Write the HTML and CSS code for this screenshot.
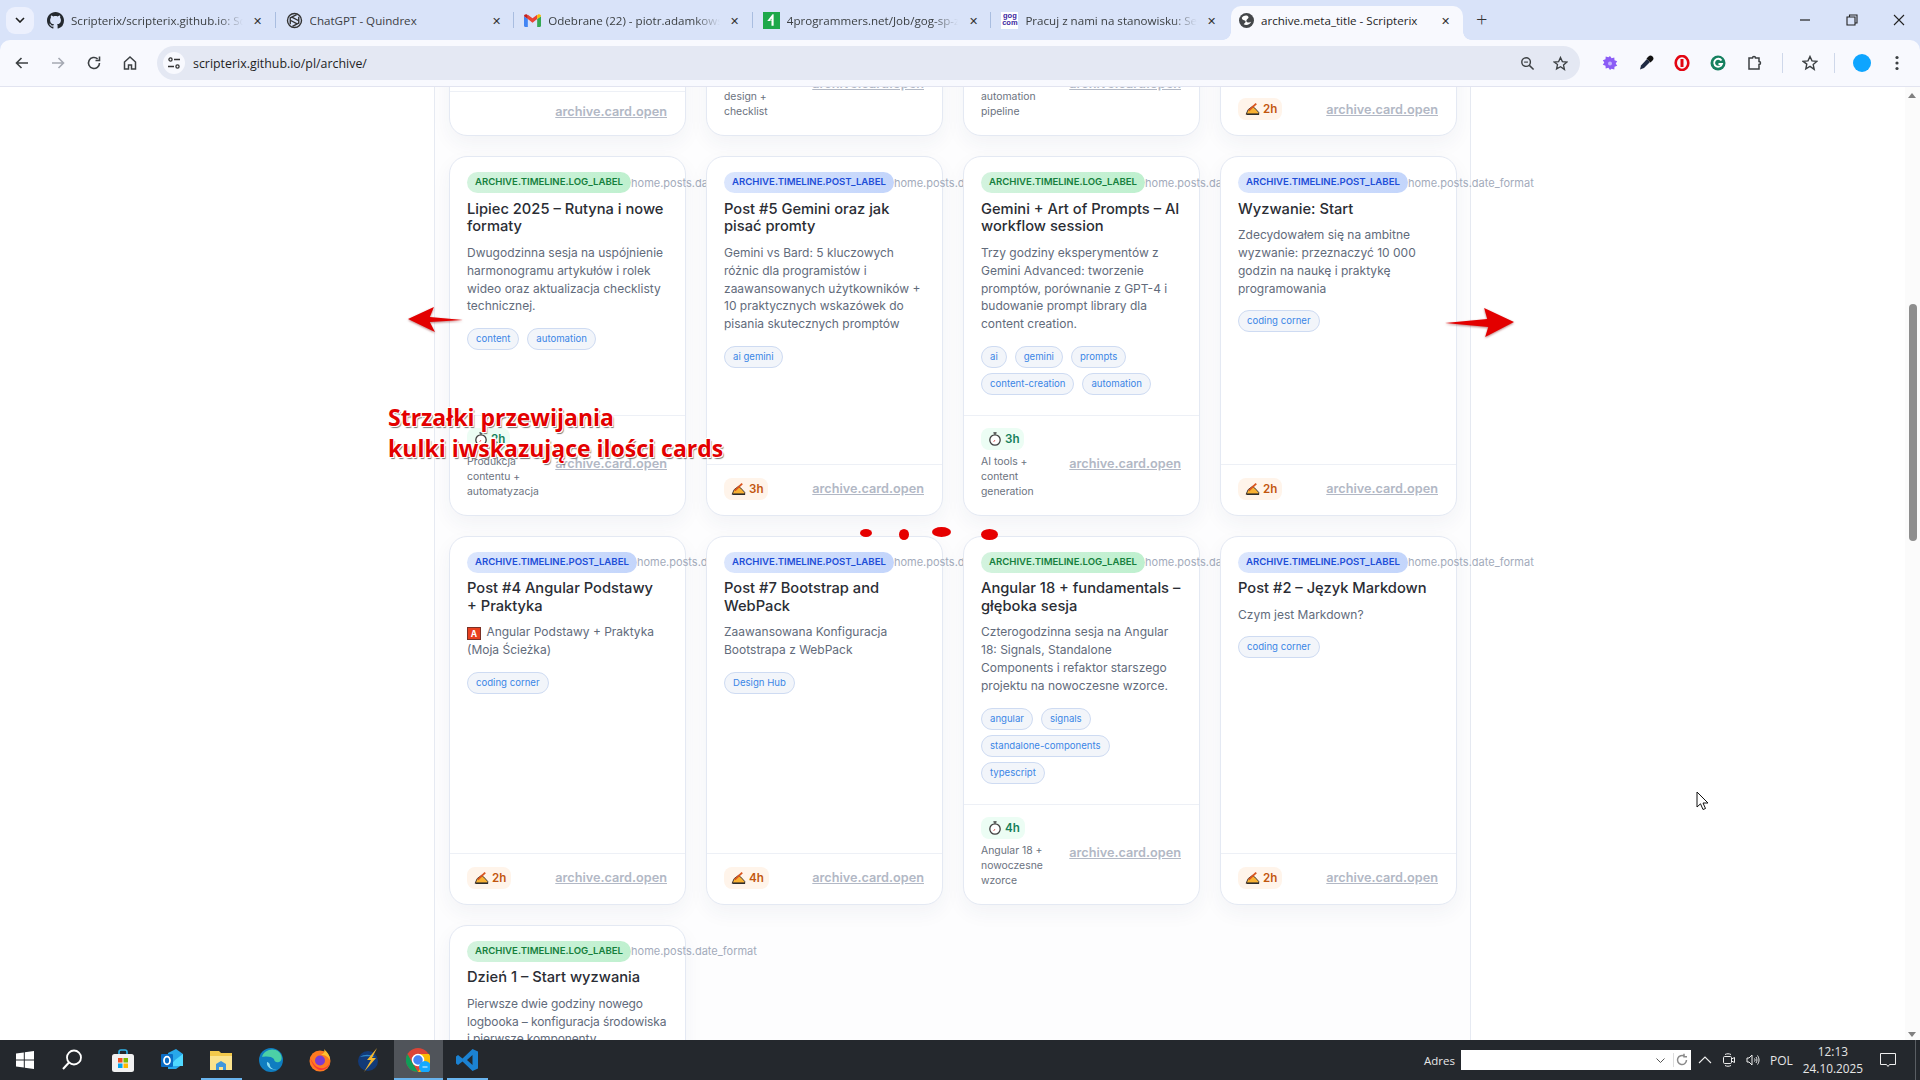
FILE: index.html
```html
<!DOCTYPE html>
<html lang="pl">
<head>
<meta charset="utf-8">
<title>archive.meta_title - Scripterix</title>
<link rel="stylesheet" href="styles.css">
</head>
<body>
<svg class="defs" width="0" height="0" aria-hidden="true">
  <symbol id="i-watch" viewBox="0 0 14 14">
    <path d="M5.4 .8h3.2M7 .8v2" fill="none" stroke="#3a3a3a" stroke-width="1.2"/>
    <circle cx="7" cy="8" r="5.2" fill="#fff" stroke="#3f3f3f" stroke-width="1.3"/>
    <path d="M7 8 5.6 10" stroke="#e06a6a" stroke-width="1"/>
  </symbol>
  <symbol id="i-hand" viewBox="0 0 16 14">
    <path d="M1.2 12.6 3.4 7.6 8 4.2 10.4 6 14.6 10.6 14.6 12.6Z" fill="#f9b233" stroke="#3a3030" stroke-width="1"/>
    <path d="M4 8.8 12 1.2" stroke="#d9541e" stroke-width="2"/>
    <path d="M2 12.6H15" stroke="#2a2a2a" stroke-width="1.5"/>
  </symbol>
</svg>
<div class="window">
  <header class="tabstrip">
    <button class="tab-search"><svg width="10" height="6" viewBox="0 0 10 6"><path d="M1 1l4 4 4-4" fill="none" stroke="#1f1f1f" stroke-width="1.6"/></svg></button>
    <div class="tab">
      <svg class="fav" viewBox="0 0 16 16"><path fill="#24292f" d="M8 0C3.58 0 0 3.58 0 8c0 3.54 2.29 6.53 5.47 7.59.4.07.55-.17.55-.38 0-.19-.01-.82-.01-1.49-2.01.37-2.53-.49-2.69-.94-.09-.23-.48-.94-.82-1.13-.28-.15-.68-.52-.01-.53.63-.01 1.08.58 1.23.82.72 1.21 1.87.87 2.33.66.07-.52.28-.87.51-1.07-1.78-.2-3.64-.89-3.64-3.95 0-.87.31-1.59.82-2.15-.08-.2-.36-1.02.08-2.12 0 0 .67-.21 2.2.82.64-.18 1.32-.27 2-.27.68 0 1.36.09 2 .27 1.53-1.04 2.2-.82 2.2-.82.44 1.1.16 1.92.08 2.12.51.56.82 1.27.82 2.15 0 3.07-1.87 3.75-3.65 3.95.29.25.54.73.54 1.48 0 1.07-.01 1.93-.01 2.2 0 .21.15.46.55.38A8.013 8.013 0 0016 8c0-4.42-3.58-8-8-8z"/></svg>
      <span class="tab-title tab-title--fade">Scripterix/scripterix.github.io: Scripterix</span>
      <span class="tab-x">✕</span>
    </div>
    <div class="tab">
      <svg class="fav" viewBox="0 0 16 16"><g fill="none" stroke="#333" stroke-width="1.3"><circle cx="8" cy="8" r="6.6"/><path d="M4 5.5 10 2.5M12 4.5V11M12 10.5 6 13.5M4 11.5V5M6 5 11.5 8M10 11 4.5 8"/></g></svg>
      <span class="tab-title">ChatGPT - Quindrex</span>
      <span class="tab-x">✕</span>
    </div>
    <div class="tab">
      <svg class="fav" viewBox="0 0 16 13"><path fill="#4285f4" d="M0 12.5V2.5l3.6 2.7v7.3H1a1 1 0 0 1-1-1z"/><path fill="#34a853" d="M12.4 12.5V5.2L16 2.5v9a1 1 0 0 1-1 1z"/><path fill="#ea4335" d="M3.6 5.2V1L8 4.3 12.4 1v4.2L8 8.5z"/><path fill="#c5221f" d="M0 2.5C0 1 1.8.2 3 1.1l.6.4v3.7z"/><path fill="#fbbc04" d="M16 2.5C16 1 14.2.2 13 1.1l-.6.4v3.7z"/></svg>
      <span class="tab-title tab-title--fade">Odebrane (22) - piotr.adamkowski@gmail.com</span>
      <span class="tab-x">✕</span>
    </div>
    <div class="tab">
      <svg class="fav" viewBox="0 0 16 16"><rect width="16" height="16" fill="#1ea84a"/><path d="M9 2 4 8.5h4V13h2V2z" fill="#fff"/><path d="M8 6 6.5 8H8z" fill="#1ea84a"/></svg>
      <span class="tab-title tab-title--fade">4programmers.net/Job/gog-sp-z-o-o-praca</span>
      <span class="tab-x">✕</span>
    </div>
    <div class="tab">
      <span class="fav fav-gog">gog<br>com</span>
      <span class="tab-title tab-title--fade">Pracuj z nami na stanowisku: Senior</span>
      <span class="tab-x">✕</span>
    </div>
    <div class="tab tab--active">
      <svg class="fav fav--small" viewBox="0 0 16 16"><circle cx="8" cy="8" r="8" fill="#44474a"/><path d="M3 5c2-3 6-3 7-1s-3 3-2 5 4 1 5 0c-1 3-5 5-8 3 2-2 3-3 1-4S3 7 3 5z" fill="#fff"/></svg>
      <span class="tab-title">archive.meta_title - Scripterix</span>
      <span class="tab-x">✕</span>
    </div>
    <span class="tab-new">+</span>
    <div class="win-controls">
      <svg width="12" height="12" viewBox="0 0 12 12"><path d="M1 6h10" stroke="#222" stroke-width="1.2"/></svg>
      <svg width="12" height="12" viewBox="0 0 12 12"><path d="M3.5 3V1h7.5v8H9M1 3h8v8H1z" fill="none" stroke="#222" stroke-width="1.1"/></svg>
      <svg width="12" height="12" viewBox="0 0 12 12"><path d="M1 1l10 10M11 1 1 11" stroke="#222" stroke-width="1.1"/></svg>
    </div>
  </header>

  <nav class="toolbar">
    <svg class="tool" viewBox="0 0 16 16"><path d="M14 8H3M7.5 3 2.5 8l5 5" fill="none" stroke="#3c4043" stroke-width="1.6"/></svg>
    <svg class="tool" viewBox="0 0 16 16"><path d="M2 8h11M8.5 3l5 5-5 5" fill="none" stroke="#a5a9b3" stroke-width="1.6"/></svg>
    <svg class="tool" viewBox="0 0 16 16"><path d="M13.5 8A5.5 5.5 0 1 1 11.6 3.8M13.5 1.5v4h-4" fill="none" stroke="#3c4043" stroke-width="1.6"/></svg>
    <svg class="tool" viewBox="0 0 16 16"><path d="M2.5 7 8 2l5.5 5v7h-4v-4h-3v4h-4z" fill="none" stroke="#3c4043" stroke-width="1.5"/></svg>
    <div class="omnibox">
      <span class="site-info"><svg width="14" height="14" viewBox="0 0 14 14"><g fill="none" stroke="#333" stroke-width="1.3"><circle cx="3.5" cy="3.5" r="1.6"/><path d="M7 3.5h6M1 10.5h6"/><circle cx="10.5" cy="10.5" r="1.6"/></g></svg></span>
      <span class="url">scripterix.github.io/pl/archive/</span>
      <span class="omni-spacer"></span>
      <svg class="omni-icon" viewBox="0 0 16 16"><circle cx="6.5" cy="6.5" r="4.6" fill="none" stroke="#3c4043" stroke-width="1.5"/><path d="M10 10l4.5 4.5" stroke="#3c4043" stroke-width="1.6"/><path d="M4.5 6.5h4" stroke="#3c4043" stroke-width="1.2"/></svg>
      <svg class="omni-icon" viewBox="0 0 16 16"><path d="M8 1.5l2 4.400 4.800.5-3.600 3.200 1 4.700L8 11.400 3.800 13.800l1-4.700L1.200 6.400 6 5.900z" fill="none" stroke="#3c4043" stroke-width="1.4"/></svg>
    </div>
    <div class="ext-row">
      <svg class="ext" viewBox="0 0 16 16"><path d="M8 1l1.600 2.300 2.700-.8.2 2.800 2.700.9-1.500 2.300 1.500 2.300-2.700.9-.2 2.800-2.700-.8L8 15l-1.600-2.300-2.700.8-.2-2.800-2.700-.9 1.500-2.300-1.500-2.300 2.700-.9.2-2.800 2.700.8z" fill="#8b5cf6"/><circle cx="8" cy="8.500" r="2" fill="#c4b5fd"/></svg>
      <svg class="ext" viewBox="0 0 16 16"><path d="M2 14.500l1-4L9 4l3 3-6 6z" fill="#1f2a44"/><path d="M8.500 3.500l2-2a2 2 0 0 1 4 4l-2 2z" fill="#111"/></svg>
      <svg class="ext" viewBox="0 0 16 16"><ellipse cx="8" cy="8" rx="6.300" ry="7" fill="none" stroke="#e30613" stroke-width="2.600"/><path d="M6.500 4h3v8h-3z" fill="#e30613"/></svg>
      <svg class="ext" viewBox="0 0 16 16"><circle cx="8" cy="8" r="7.500" fill="#15805f"/><path d="M11.500 5.500A4 4 0 1 0 12 9H8.500" fill="none" stroke="#fff" stroke-width="1.800"/></svg>
      <svg class="ext" viewBox="0 0 16 16"><path d="M3 3h3.500a1.500 1.500 0 0 1 3 0H13v3.500a1.500 1.500 0 0 1 0 3V14H3z" fill="none" stroke="#3c4043" stroke-width="1.500"/></svg>
      <span class="divider"></span>
      <svg class="ext" viewBox="0 0 16 16"><path d="M8 1.500l2 4.400 4.800.5-3.600 3.200 1 4.700L8 11.400 3.800 13.800l1-4.700L1.200 6.400 6 5.900z" fill="none" stroke="#3c4043" stroke-width="1.400"/></svg>
      <span class="divider divider--tight"></span>
      <span class="profile"></span>
      <svg class="menu-dots" width="4" height="16" viewBox="0 0 4 16"><g fill="#3c4043"><circle cx="2" cy="2.500" r="1.600"/><circle cx="2" cy="8" r="1.600"/><circle cx="2" cy="13.500" r="1.600"/></g></svg>
    </div>
  </nav>

  <div class="viewport">
    <main class="page">
      <section class="archive">
        <div class="grid">
          <!-- row 1, scrolled mostly out of view -->
          <article class="card card--scrolled">
            <div class="card-body"></div>
            <footer class="card-footer card-footer--end"><a class="open">archive.card.open</a></footer>
          </article>
          <article class="card card--scrolled">
            <div class="card-body"></div>
            <footer class="card-footer">
              <div class="meta"><span class="pill pill--log"><svg class="pill-icon"><use href="#i-watch"/></svg>2h</span><span class="note">Templates design + checklist</span></div>
              <a class="open">archive.card.open</a>
            </footer>
          </article>
          <article class="card card--scrolled">
            <div class="card-body"></div>
            <footer class="card-footer">
              <div class="meta"><span class="pill pill--log"><svg class="pill-icon"><use href="#i-watch"/></svg>2h</span><span class="note">Content automation pipeline</span></div>
              <a class="open">archive.card.open</a>
            </footer>
          </article>
          <article class="card card--scrolled">
            <div class="card-body"></div>
            <footer class="card-footer">
              <div class="meta"><span class="pill pill--post"><svg class="pill-icon pill-icon--hand"><use href="#i-hand"/></svg>2h</span></div>
              <a class="open">archive.card.open</a>
            </footer>
          </article>

          <!-- row 2 -->
          <article class="card">
            <div class="card-body">
              <div class="card-head"><span class="badge badge--log">archive.timeline.log_label</span><span class="date">home.posts.date_format</span></div>
              <h3 class="title">Lipiec 2025 – Rutyna i nowe formaty</h3>
              <p class="desc">Dwugodzinna sesja na uspójnienie harmonogramu artykułów i rolek wideo oraz aktualizacja checklisty technicznej.</p>
              <div class="tags"><span class="tag">content</span><span class="tag">automation</span></div>
            </div>
            <footer class="card-footer">
              <div class="meta"><span class="pill pill--log"><svg class="pill-icon"><use href="#i-watch"/></svg>2h</span><span class="note">Produkcja contentu + automatyzacja</span></div>
              <a class="open">archive.card.open</a>
            </footer>
          </article>
          <article class="card">
            <div class="card-body">
              <div class="card-head"><span class="badge badge--post">archive.timeline.post_label</span><span class="date">home.posts.date_format</span></div>
              <h3 class="title">Post #5 Gemini oraz jak pisać promty</h3>
              <p class="desc">Gemini vs Bard: 5 kluczowych różnic dla programistów i zaawansowanych użytkowników + 10 praktycznych wskazówek do pisania skutecznych promptów</p>
              <div class="tags"><span class="tag">ai gemini</span></div>
            </div>
            <footer class="card-footer">
              <div class="meta"><span class="pill pill--post"><svg class="pill-icon pill-icon--hand"><use href="#i-hand"/></svg>3h</span></div>
              <a class="open">archive.card.open</a>
            </footer>
          </article>
          <article class="card">
            <div class="card-body">
              <div class="card-head"><span class="badge badge--log">archive.timeline.log_label</span><span class="date">home.posts.date_format</span></div>
              <h3 class="title">Gemini + Art of Prompts – AI workflow session</h3>
              <p class="desc">Trzy godziny eksperymentów z Gemini Advanced: tworzenie promptów, porównanie z GPT-4 i budowanie prompt library dla content creation.</p>
              <div class="tags"><span class="tag">ai</span><span class="tag">gemini</span><span class="tag">prompts</span><span class="tag">content-creation</span><span class="tag">automation</span></div>
            </div>
            <footer class="card-footer">
              <div class="meta"><span class="pill pill--log"><svg class="pill-icon"><use href="#i-watch"/></svg>3h</span><span class="note">AI tools + content generation</span></div>
              <a class="open">archive.card.open</a>
            </footer>
          </article>
          <article class="card">
            <div class="card-body">
              <div class="card-head"><span class="badge badge--post">archive.timeline.post_label</span><span class="date">home.posts.date_format</span></div>
              <h3 class="title">Wyzwanie: Start</h3>
              <p class="desc">Zdecydowałem się na ambitne wyzwanie: przeznaczyć 10 000 godzin na naukę i praktykę programowania</p>
              <div class="tags"><span class="tag">coding corner</span></div>
            </div>
            <footer class="card-footer">
              <div class="meta"><span class="pill pill--post"><svg class="pill-icon pill-icon--hand"><use href="#i-hand"/></svg>2h</span></div>
              <a class="open">archive.card.open</a>
            </footer>
          </article>

          <!-- row 3 -->
          <article class="card">
            <div class="card-body">
              <div class="card-head"><span class="badge badge--post">archive.timeline.post_label</span><span class="date">home.posts.date_format</span></div>
              <h3 class="title">Post #4 Angular Podstawy +&nbsp;Praktyka</h3>
              <p class="desc"><span class="letter-a">A</span> Angular Podstawy + Praktyka (Moja Ścieżka)</p>
              <div class="tags"><span class="tag">coding corner</span></div>
            </div>
            <footer class="card-footer">
              <div class="meta"><span class="pill pill--post"><svg class="pill-icon pill-icon--hand"><use href="#i-hand"/></svg>2h</span></div>
              <a class="open">archive.card.open</a>
            </footer>
          </article>
          <article class="card">
            <div class="card-body">
              <div class="card-head"><span class="badge badge--post">archive.timeline.post_label</span><span class="date">home.posts.date_format</span></div>
              <h3 class="title">Post #7 Bootstrap and WebPack</h3>
              <p class="desc">Zaawansowana Konfiguracja Bootstrapa z WebPack</p>
              <div class="tags"><span class="tag">Design Hub</span></div>
            </div>
            <footer class="card-footer">
              <div class="meta"><span class="pill pill--post"><svg class="pill-icon pill-icon--hand"><use href="#i-hand"/></svg>4h</span></div>
              <a class="open">archive.card.open</a>
            </footer>
          </article>
          <article class="card">
            <div class="card-body">
              <div class="card-head"><span class="badge badge--log">archive.timeline.log_label</span><span class="date">home.posts.date_format</span></div>
              <h3 class="title">Angular 18 + fundamentals – głęboka sesja</h3>
              <p class="desc">Czterogodzinna sesja na Angular 18: Signals, Standalone Components i refaktor starszego projektu na nowoczesne wzorce.</p>
              <div class="tags"><span class="tag">angular</span><span class="tag">signals</span><span class="tag">standalone-components</span><span class="tag">typescript</span></div>
            </div>
            <footer class="card-footer">
              <div class="meta"><span class="pill pill--log"><svg class="pill-icon"><use href="#i-watch"/></svg>4h</span><span class="note">Angular 18 + nowoczesne wzorce</span></div>
              <a class="open">archive.card.open</a>
            </footer>
          </article>
          <article class="card">
            <div class="card-body">
              <div class="card-head"><span class="badge badge--post">archive.timeline.post_label</span><span class="date">home.posts.date_format</span></div>
              <h3 class="title">Post #2 – Język Markdown</h3>
              <p class="desc">Czym jest Markdown?</p>
              <div class="tags"><span class="tag">coding corner</span></div>
            </div>
            <footer class="card-footer">
              <div class="meta"><span class="pill pill--post"><svg class="pill-icon pill-icon--hand"><use href="#i-hand"/></svg>2h</span></div>
              <a class="open">archive.card.open</a>
            </footer>
          </article>

          <!-- row 4 -->
          <article class="card">
            <div class="card-body">
              <div class="card-head"><span class="badge badge--log">archive.timeline.log_label</span><span class="date">home.posts.date_format</span></div>
              <h3 class="title">Dzień 1 – Start wyzwania</h3>
              <p class="desc desc--tight">Pierwsze dwie godziny nowego logbooka – konfiguracja środowiska i pierwsze komponenty.</p>
            </div>
          </article>
        </div>
      </section>
    </main>
    <aside class="scrollbar">
      <span class="sb-arrow sb-arrow--up"></span>
      <span class="sb-thumb"></span>
      <span class="sb-arrow sb-arrow--down"></span>
    </aside>
  </div>

  <footer class="taskbar">
    <div class="task-apps">
      <span class="task"><svg viewBox="0 0 24 24"><path fill="#fff" d="M3 5.500 10.800 4.400v7.100H3zM11.800 4.300 21 3v8.500h-9.200zM3 12.500h7.800v7.100L3 18.500zM11.800 12.500H21V21l-9.200-1.300z"/></svg></span>
      <span class="task task--search"><svg viewBox="0 0 24 24"><circle cx="14" cy="9.500" r="7" fill="none" stroke="#fff" stroke-width="1.800"/><path d="M9 14.500 3 21" stroke="#fff" stroke-width="2"/></svg></span>
      <span class="task"><svg viewBox="0 0 24 24"><path d="M8 6V4a2 2 0 0 1 2-2h4a2 2 0 0 1 2 2v2" fill="none" stroke="#2fb2e8" stroke-width="1.600"/><rect x="1" y="6" width="22" height="18" rx="2.500" fill="#f1f1f1"/><rect x="7" y="10" width="4.500" height="4.500" fill="#f25022"/><rect x="12.500" y="10" width="4.500" height="4.500" fill="#7fba00"/><rect x="7" y="15.500" width="4.500" height="4.500" fill="#00a4ef"/><rect x="12.500" y="15.500" width="4.500" height="4.500" fill="#ffb900"/></svg></span>
      <span class="task"><svg viewBox="0 0 24 24"><path d="M8 5l8-4 7 5v10l-7 5H8z" fill="#28a8ea"/><path d="M15 12l8-6v12H10z" fill="#50d9ff"/><rect x="1" y="6" width="12" height="13" rx="1" fill="#0a6cc4"/><ellipse cx="7" cy="12.500" rx="3" ry="3.800" fill="none" stroke="#fff" stroke-width="1.800"/></svg></span>
      <span class="task task--open"><svg viewBox="0 0 24 24"><path d="M1 3h9l2 2h11v17H1z" fill="#f3c94b"/><path d="M1 8h22v14H1z" fill="#fbe38e"/><path d="M7 22v-6l5-3 5 3v6h-3v-3h-4v3z" fill="#3f97dd"/></svg></span>
      <span class="task"><svg viewBox="0 0 24 24"><circle cx="12" cy="12" r="12" fill="#0f7dc0"/><path d="M3 9C5 2 14-1 20 4c4 4 3 9 0 10-3 1-5-1-5-3-2-3-9-3-12-2z" fill="#4cd0a6"/><path d="M8 14c-1 5 5 9 10 7-4 1-6-1-7-3 0-3-2-4-3-4z" fill="#8adcf0"/></svg></span>
      <span class="task"><svg viewBox="0 0 24 24"><circle cx="12" cy="13" r="10.500" fill="#ff7a21"/><path d="M16 1c3 3 6 6 6 11-2-3-4-5-9-5 3-2 4-3 3-6z" fill="#ffc02f"/><path d="M2 10c2 5 5 12 11 12 5 0 9-4 9-9-1 6-6 8-10 7C7 19 5 15 2 10z" fill="#f9373b"/><circle cx="12" cy="12.500" r="5" fill="#7d3bd1"/></svg></span>
      <span class="task"><svg viewBox="0 0 24 24"><circle cx="11" cy="13" r="10" fill="#123a78"/><path d="M3 9c4-3 10-3 15 0-4-1-11-1-15 0z" fill="#2e87c9"/><path d="M20 0 10 12h4L7 24l12-14h-4z" fill="#f5b82e"/></svg></span>
      <span class="task task--open task--active"><svg viewBox="0 0 24 24"><circle cx="12" cy="12" r="12" fill="#db4437"/><path d="M12 6h11A12 12 0 0 1 12 24l5-8z" fill="#fbbc05"/><path d="M1.500 6 7 16l5 8A12 12 0 0 1 1.500 6z" fill="#0f9d58"/><circle cx="12" cy="12" r="5.500" fill="#4285f4" stroke="#fff" stroke-width="1.500"/><circle cx="19" cy="19" r="6" fill="#14a9ff"/><path d="M16.500 19h5" stroke="#e8f6ff" stroke-width="1"/></svg></span>
      <span class="task task--open"><svg viewBox="0 0 24 24"><path d="M17.500 1 23 3.500v17L17.500 23 7.500 13.500 3 17l-2-1.500v-7L3 7l4.500 3.500zM17.500 7l-5.500 5 5.500 5z" fill="#1b82d2"/></svg></span>
    </div>
    <div class="tray">
      <span class="addr-label">Adres</span>
      <span class="addr-input">
        <svg class="addr-chevron" width="9" height="5" viewBox="0 0 9 5"><path d="M.5.500l4 4 4-4" fill="none" stroke="#555"/></svg>
        <svg class="addr-refresh" width="14" height="14" viewBox="0 0 14 14"><path d="M11.500 7a4.500 4.500 0 1 1-2-3.700M9 .8v3h3" fill="none" stroke="#8a8a8a" stroke-width="1.500"/></svg>
      </span>
      <svg class="tray-icon tray-icon--first" viewBox="0 0 14 14"><path d="M1 10l6-6 6 6" fill="none" stroke="#eee" stroke-width="1.100"/></svg>
      <svg class="tray-icon" viewBox="0 0 14 14"><g fill="none" stroke="#eee"><rect x="1.500" y="3.500" width="8" height="7" rx="1.200"/><path d="M9.500 6l3-1.500v5l-3-1.500M3 1.500c2-1 4-1 6 0M3 12.500c2 1 4 1 6 0"/></g></svg>
      <svg class="tray-icon" viewBox="0 0 14 14"><g fill="none" stroke="#eee"><path d="M1 5h2l3-3v10L3 9H1zM8.500 5.500c.7 1 .7 2 0 3M10 4c1.300 2 1.300 4 0 6M11.500 2.500c2 3 2 6 0 9"/></g></svg>
      <span class="lang">POL</span>
      <span class="clock"><span>12:13</span><span>24.10.2025</span></span>
      <svg class="notif" width="16" height="15" viewBox="0 0 16 15"><path d="M.5.500h15v11H9.500L8 13.500 6.500 11.500H.5z" fill="none" stroke="#eee"/></svg>
      <span class="show-desktop"></span>
    </div>
  </footer>

  <!-- annotations drawn over the screenshot -->
  <svg class="mark mark--arrow-left" viewBox="0 0 53 25" preserveAspectRatio="none"><path d="M0 12 25 0 21 10 53 13 21 15 26 25Z" fill="#e30000"/></svg>
  <svg class="mark mark--arrow-right" viewBox="0 0 67 29" preserveAspectRatio="none"><path d="M0 15 41 11 38 0 67 14 39 29 42 19Z" fill="#e30000"/></svg>
  <div class="note-overlay">
    <div>Strzałki przewijania</div>
    <div>kulki iwskazujące ilości cards</div>
  </div>
  <span class="dot dot--1"></span>
  <span class="dot dot--2"></span>
  <span class="dot dot--3"></span>
  <span class="dot dot--4"></span>
  <svg class="cursor" width="13" height="20" viewBox="0 0 13 20"><path d="M1 1v15l3.500-3.200L7 18.500l2.500-1-2.500-5.500h5z" fill="#fff" stroke="#111" stroke-width="1"/></svg>
</div>
</body>
</html>
```

FILE: styles.css
```css
* { box-sizing: border-box; }
html, body { margin: 0; height: 100%; overflow: hidden; }
body { font-family: Inter, "Liberation Sans", sans-serif; background: #fff; }
.defs { position: absolute; }
.window { position: relative; width: 1920px; height: 1080px; display: flex; flex-direction: column; overflow: hidden; background: #d9e3f9; }

/* tab strip */
.tabstrip { height: 40px; flex: none; display: flex; align-items: center; padding-left: 6px; font-family: "Open Sans", "Noto Sans", sans-serif; }
.tab-search { width: 28px; height: 27px; margin-right: 2px; border: 0; border-radius: 9px; background: #ecf0fd; display: flex; align-items: center; justify-content: center; padding: 0; }
.tab { width: 238.6px; height: 40px; flex: none; display: flex; align-items: center; padding: 0 9px 0 11px; gap: 7px; position: relative; color: #3c4043; }
.tab + .tab::before { content: ""; position: absolute; left: 0; top: 12px; height: 16px; width: 1px; background: #a9bde0; }
.tab--active { background: #f8f9fe; border-radius: 10px 10px 0 0; width: 232px; margin-top: 6px; height: 34px; margin-left: 2px; padding: 0 9px 6px 8px; color: #1f1f1f; align-self: flex-start; }
.tab.tab--active::before, .tab.tab--active::after { content: ""; position: absolute; top: auto; bottom: 0; width: 8px; height: 8px; }
.tab.tab--active::before { left: -8px; background: radial-gradient(circle at 0 0, transparent 7.5px, #f8f9fe 8px); }
.tab.tab--active::after { right: -8px; background: radial-gradient(circle at 100% 0, transparent 7.5px, #f8f9fe 8px); }
.fav { width: 17px; height: 17px; flex: none; }
.fav--small { width: 15px; height: 15px; }
.fav-gog { background: #fff; color: #3a1fa0; font: 700 7.5px/7.5px "Liberation Sans", sans-serif; text-align: center; overflow: hidden; }
.tab-title { flex: 1; min-width: 0; font-size: 11.6px; white-space: nowrap; overflow: hidden; }
.tab-title--fade { -webkit-mask-image: linear-gradient(90deg, #000 85%, transparent); mask-image: linear-gradient(90deg, #000 85%, transparent); }
.tab-x { font-size: 11px; width: 16px; text-align: center; flex: none; color: #333; }
.tab-new { font-size: 20px; font-weight: 300; margin-left: 13px; color: #333; line-height: 1; }
.win-controls { margin-left: auto; display: flex; gap: 35px; padding-right: 15px; }

/* toolbar */
.toolbar { height: 47px; flex: none; display: flex; align-items: center; background: #f8f9fe; border-bottom: 1px solid #e2e4f0; border-radius: 10px 10px 0 0; padding-left: 14px; }
.tool { width: 16px; height: 16px; margin-right: 20px; flex: none; }
.omnibox { width: 1423px; height: 34px; margin-left: -1px; border-radius: 17px; background: #e4e8f3; display: flex; align-items: center; padding: 0 12px 0 6px; }
.site-info { width: 22px; height: 22px; border-radius: 50%; background: #f8f9fe; display: flex; align-items: center; justify-content: center; flex: none; }
.url { margin-left: 8px; font: 12.4px "Open Sans", sans-serif; color: #1f1f1f; }
.omni-spacer { flex: 1; }
.omni-icon { width: 15px; height: 15px; margin-left: 18px; }
.ext-row { display: flex; align-items: center; margin-left: 22px; }
.ext { width: 16px; height: 16px; margin-right: 20px; flex: none; }
.divider { width: 1px; height: 20px; background: #cfd8ea; margin: 0 19px 0 0; flex: none; }
.divider--tight { margin-right: 18px; margin-left: -4px; }
.profile { width: 18px; height: 18px; border-radius: 50%; background: #0ea5ff; margin-right: 24px; flex: none; }

/* page */
.viewport { flex: 1; min-height: 0; display: flex; }
.page { flex: 1; min-width: 0; display: flex; justify-content: center; overflow: hidden; background: #fff; }
.archive { width: 1037px; height: max-content; padding: 0 14px; background: #fdfdfe; border-left: 1px solid #e6eaf2; border-right: 1px solid #e6eaf2; }
.grid { display: grid; grid-template-columns: repeat(4, 237px); gap: 20px; margin-top: -111px; }
.card { position: relative; display: flex; flex-direction: column; background: #fff; border: 1px solid #e4e9f3; border-radius: 18px; box-shadow: 0 8px 20px rgba(30, 50, 90, .05); }
.card--scrolled { min-height: 160px; }
.card-body { flex: 1; padding: 15px 17px 20px; min-width: 0; }
.card-head { display: flex; align-items: center; white-space: nowrap; }
.badge { flex: none; padding: 0 8px; height: 21px; line-height: 20px; border-radius: 11px; font-size: 9.6px; font-weight: 600; text-transform: uppercase; }
.badge--log { color: #15803d; background: linear-gradient(90deg, #d3f3de, #bff0cf); }
.badge--post { color: #1d4ed8; background: linear-gradient(90deg, #dbe6fd, #c3d5fb); }
.date { font-size: 11px; line-height: 20px; color: #a3abbb; }
.title { margin: 7.5px 0 0; font-size: 14.7px; line-height: 17.6px; font-weight: 500; color: #2a2d34; }
.desc { margin: 8px 0 0; font-size: 12px; line-height: 17.9px; color: #626b7b; }
.desc--tight { letter-spacing: -.12px; }
.letter-a { display: inline-block; width: 14px; height: 13px; margin-right: 2px; line-height: 12px; font-size: 8.5px; font-weight: 700; text-align: center; background: #e8401f; color: #fff; border: 1px solid #7a3025; vertical-align: -1px; }
.tags { display: flex; flex-wrap: wrap; gap: 5px 8px; margin-top: 12.5px; padding-right: 4px; }
.tag { height: 22px; line-height: 19.5px; padding: 0 8px; border: 1px solid #cedbf2; border-radius: 11px; background: #f2f5fa; color: #3b86e6; font-size: 9.6px; white-space: nowrap; }
.card-footer { flex: none; display: flex; align-items: center; justify-content: space-between; gap: 12px; padding: 12px 18px 16px 17px; border-top: 1px solid #edf0f6; }
.card-footer:has(.pill):not(:has(.note)) { padding-top: 13px; padding-bottom: 15px; }
.card-footer--end { justify-content: flex-end; }
.meta { display: flex; flex-direction: column; align-items: flex-start; gap: 4px; min-width: 0; }
.pill { display: inline-flex; align-items: center; gap: 3px; height: 22px; padding: 0 5px 0 7px; border-radius: 8px; font-size: 11.6px; font-weight: 600; }
.pill--log { background: #ecfdf4; color: #15805a; }
.pill--post { background: #fff4ea; color: #c2560f; }
.pill-icon { width: 14px; height: 14px; flex: none; }
.pill-icon--hand { width: 15px; }
.note { font-size: 10.4px; line-height: 15px; color: #6b7280; }
.open { flex: none; font-size: 12.7px; font-weight: 600; color: #b2b8c5; text-decoration: underline; }

/* scrollbar */
.scrollbar { width: 15px; flex: none; position: relative; background: #fbfbfb; }
.sb-arrow { position: absolute; left: 3px; width: 0; height: 0; border-left: 4.5px solid transparent; border-right: 4.5px solid transparent; }
.sb-arrow--up { top: 6px; border-bottom: 5px solid #808080; }
.sb-arrow--down { bottom: 3px; border-top: 5px solid #808080; }
.sb-thumb { position: absolute; left: 4px; top: 217px; width: 8px; height: 237px; border-radius: 4px; background: #8e8e8e; }

/* taskbar */
.taskbar { height: 40px; flex: none; display: flex; justify-content: space-between; background: #24282d; }
.task-apps { display: flex; }
.task { width: 49.200px; height: 40px; display: flex; align-items: center; justify-content: center; flex: none; position: relative; }
.task svg { width: 24px; height: 24px; }
.task--search svg { margin-left: -4px; }
.task--open::after { content: ""; position: absolute; left: 4px; right: 4px; bottom: 0; height: 2px; background: #69b4ee; }
.task--active { background: #50545a; }
.task--active::after { left: 0; right: 0; }
.tray { display: flex; align-items: center; color: #e6e6e6; font: 12px "Open Sans", sans-serif; }
.addr-label { margin-right: 6px; font-size: 11.5px; }
.addr-input { width: 230px; height: 20px; background: #fff; display: flex; align-items: center; justify-content: flex-end; gap: 4px; padding-right: 1px; }
.addr-chevron { margin-right: 4px; }
.addr-refresh { padding-left: 0; border-left: 1px solid #ddd; width: 17px; }
.tray-icon { width: 14px; height: 14px; margin-right: 10px; flex: none; }
.tray-icon--first { margin-left: 7px; }
.lang { margin-left: 0; margin-right: 10px; }
.clock { display: flex; flex-direction: column; align-items: center; line-height: 17.500px; font-size: 11.800px; margin-right: 17px; }
.notif { flex: none; }
.show-desktop { width: 1px; height: 40px; background: #5a5e63; margin-left: 19px; margin-right: 4px; }

/* annotations */
.mark { position: absolute; filter: drop-shadow(0 1px 1px rgba(120, 0, 0, .5)); }
.mark--arrow-left { left: 408px; top: 307px; width: 55px; height: 25px; }
.mark--arrow-right { left: 1445px; top: 308px; width: 69px; height: 29px; }
.note-overlay { position: absolute; left: 388px; top: 402px; font: 700 23px/31px "Open Sans", "Noto Sans", sans-serif; color: #e30000; white-space: nowrap; text-shadow: 1px 1px 0 #fff, -1px -1px 0 #fff, 1px -1px 0 #fff, -1px 1px 0 #fff, 1.500px 1.500px 1px #777; }
.dot { position: absolute; background: #e60000; border-radius: 50%; }
.dot--1 { left: 860px; top: 529px; width: 12px; height: 8px; }
.dot--2 { left: 899px; top: 529px; width: 10px; height: 11px; }
.dot--3 { left: 932px; top: 527px; width: 19px; height: 10px; }
.dot--4 { left: 981px; top: 529px; width: 17px; height: 11px; }
.cursor { position: absolute; left: 1696px; top: 791px; }
```
